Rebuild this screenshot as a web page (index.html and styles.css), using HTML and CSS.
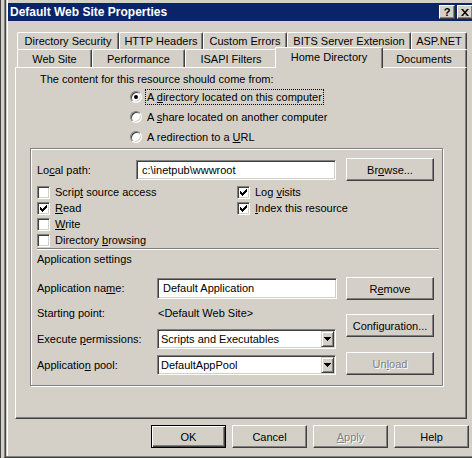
FILE: index.html
```html
<!DOCTYPE html>
<html>
<head>
<meta charset="utf-8">
<title>Default Web Site Properties</title>
<link rel="stylesheet" href="styles.css">
</head>
<body>
<div class="desk">
  <div class="behind"></div>
  <div class="win">
    <div class="frame">
      <div class="titlebar">
        <span class="title">Default Web Site Properties</span>
        <span class="capbtn help">?</span>
        <span class="capbtn close"><svg width="8" height="7" viewBox="0 0 8 7"><path d="M0 0h2l2 2.4L6 0h2L5 3.5 8 7H6L4 4.6 2 7H0l3-3.5z" fill="#000"/></svg></span>
      </div>
      <div class="client">
        <div class="tabs">
          <div class="tabrow row1">
            <div class="tab tab-dirsec">Directory Security</div>
            <div class="tab tab-http">HTTP Headers</div>
            <div class="tab tab-errors">Custom Errors</div>
            <div class="tab tab-bits">BITS Server Extension</div>
            <div class="tab tab-asp">ASP.NET</div>
          </div>
          <div class="tabrow row2">
            <div class="tab tab-web">Web Site</div>
            <div class="tab tab-perf">Performance</div>
            <div class="tab tab-isapi">ISAPI Filters</div>
            <div class="tab tab-home selected">Home Directory</div>
            <div class="tab tab-docs">Documents</div>
          </div>
          <div class="panel">
            <p class="intro">The content for this resource should come from:</p>
            <div class="radios">
              <div class="opt"><span class="radio on"></span><span class="lbl focus">A <u>d</u>irectory located on this computer</span></div>
              <div class="opt"><span class="radio"></span><span class="lbl">A <u>s</u>hare located on another computer</span></div>
              <div class="opt"><span class="radio"></span><span class="lbl">A redirection to a <u>U</u>RL</span></div>
            </div>
            <div class="group">
              <div class="pathrow">
                <span class="plabel">Lo<u>c</u>al path:</span>
                <span class="field path">c:\inetpub\wwwroot</span>
                <span class="btn browse"><span>Br<u>o</u>wse...</span></span>
              </div>
              <div class="checks">
                <div class="chkcol left">
                  <div class="chk"><span class="box"></span><span>Scrip<u>t</u> source access</span></div>
                  <div class="chk"><span class="box"><svg width="7" height="7" viewBox="0 0 7 7"><path d="M0 2h1v3H0zM1 3h1v3H1zM2 4h1v3H2zM3 3h1v3H3zM4 2h1v3H4zM5 1h1v3H5zM6 0h1v3H6z" fill="#000"/></svg></span><span><u>R</u>ead</span></div>
                  <div class="chk"><span class="box"></span><span><u>W</u>rite</span></div>
                  <div class="chk"><span class="box"></span><span>Directory <u>b</u>rowsing</span></div>
                </div>
                <div class="chkcol">
                  <div class="chk"><span class="box"><svg width="7" height="7" viewBox="0 0 7 7"><path d="M0 2h1v3H0zM1 3h1v3H1zM2 4h1v3H2zM3 3h1v3H3zM4 2h1v3H4zM5 1h1v3H5zM6 0h1v3H6z" fill="#000"/></svg></span><span>Log <u>v</u>isits</span></div>
                  <div class="chk"><span class="box"><svg width="7" height="7" viewBox="0 0 7 7"><path d="M0 2h1v3H0zM1 3h1v3H1zM2 4h1v3H2zM3 3h1v3H3zM4 2h1v3H4zM5 1h1v3H5zM6 0h1v3H6z" fill="#000"/></svg></span><span><u>I</u>ndex this resource</span></div>
                </div>
              </div>
              <div class="sep"></div>
              <div class="subhead">Application settings</div>
              <div class="app">
                <div class="appfields">
                  <div class="frow first"><span class="flabel">Application na<u>m</u>e:</span><span class="field appname">Default Application</span></div>
                  <div class="frow"><span class="flabel">Starting point:</span><span class="value">&lt;Default Web Site&gt;</span></div>
                  <div class="frow"><span class="flabel">Execute <u>p</u>ermissions:</span><span class="combo"><span class="ctext">Scripts and Executables</span><span class="drop"><svg width="7" height="4" viewBox="0 0 7 4"><path d="M0 0h7v1H0zM1 1h5v1H1zM2 2h3v1H2zM3 3h1v1H3z" fill="#000"/></svg></span></span></div>
                  <div class="frow"><span class="flabel">Applicatio<u>n</u> pool:</span><span class="combo"><span class="ctext">DefaultAppPool</span><span class="drop"><svg width="7" height="4" viewBox="0 0 7 4"><path d="M0 0h7v1H0zM1 1h5v1H1zM2 2h3v1H2zM3 3h1v1H3z" fill="#000"/></svg></span></span></div>
                </div>
                <div class="appbtns">
                  <span class="btn"><span>R<u>e</u>move</span></span>
                  <span class="btn config"><span>Confi<u>g</u>uration...</span></span>
                  <span class="btn unload disabled"><span>Un<u>l</u>oad</span></span>
                </div>
              </div>
            </div>
          </div>
        </div>
        <div class="actions">
          <span class="btn default">OK</span>
          <span class="btn">Cancel</span>
          <span class="btn disabled"><span><u>A</u>pply</span></span>
          <span class="btn">Help</span>
        </div>
      </div>
    </div>
  </div>
</div>
</body>
</html>
```
FILE: styles.css
```css
* { box-sizing: border-box; }
html, body { margin: 0; padding: 0; }
body {
  width: 472px;
  height: 458px;
  overflow: hidden;
  background: #d4d0c8;
  font-family: "Liberation Sans", Arial, sans-serif;
  font-size: 11px;
  color: #000;
}
u { text-underline-offset: 1px; }

.desk { display: flex; width: 472px; height: 458px; overflow: hidden; }
.behind { flex: none; width: 4px; border-left: 1px solid #404040; background: #d4d0c8; }
.win {
  flex: 1;
  min-width: 0;
  border-left: 1px solid #808080;
  border-bottom: 1px solid #404040;
  box-shadow: inset 1px 0 0 #404040, inset 0 -1px 0 #808080;
  padding-left: 2px;
  padding-bottom: 1px;
}
.frame { height: 100%; border-left: 1px solid #fff; padding-top: 3px; }

.titlebar {
  display: flex;
  align-items: center;
  height: 18px;
  margin-right: -3px;
  padding: 0 2px;
  background: #0a246a;
  color: #fff;
}
.title { flex: 1; font-weight: bold; font-size: 12px; white-space: nowrap; }
.capbtn {
  flex: none;
  width: 16px;
  height: 14px;
  display: flex;
  align-items: center;
  justify-content: center;
  background: #d4d0c8;
  border: 1px solid;
  border-color: #fff #404040 #404040 #fff;
  box-shadow: inset -1px -1px 0 #808080;
  color: #000;
}
.help { margin-right: 2px; font-weight: bold; font-size: 11px; line-height: 12px; }
.close svg { display: block; }

.client { padding: 11px 0 0 7px; }
.tabs { width: 452px; }
.tabrow { display: flex; margin-left: 2px; }
.row1 { height: 17px; }
.row2 { height: 18px; }
.tab {
  flex: none;
  height: 100%;
  background: #d4d0c8;
  border: 1px solid #fff;
  border-bottom: none;
  border-right-color: #404040;
  box-shadow: inset -1px 0 0 #808080;
  border-radius: 2px 2px 0 0;
  text-align: center;
  line-height: 16px;
  white-space: nowrap;
}
.row2 .tab { padding-top: 1px; }
.tab-dirsec { width: 102px; }
.tab-http { width: 84px; }
.tab-errors { width: 84px; }
.tab-bits { width: 124px; }
.tab-asp { width: 56px; }
.tab-web { width: 75px; }
.tab-perf { width: 93px; }
.tab-isapi { width: 92px; }
.tab-home { width: 108px; }
.tab-docs { width: 86px; }
.row2 .tab.selected {
  position: relative;
  z-index: 1;
  height: 21px;
  margin: -2px -2px 0 -2px;
  padding-top: 0;
  line-height: 18px;
}

.panel {
  height: 352px;
  border: 1px solid;
  border-color: #fff #404040 #404040 #fff;
  box-shadow: inset -1px -1px 0 #808080;
}
.intro { margin: 5px 0 0 24px; line-height: 13px; }
.radios { margin: 1px 0 0 114px; }
.opt { display: flex; align-items: center; height: 20px; }
.radio {
  flex: none;
  width: 12px;
  height: 12px;
  margin-right: 3px;
  border-radius: 50%;
  border: 1px solid;
  border-color: #808080 #fff #fff #808080;
  box-shadow: inset 1px 1px 0 #404040, inset -1px -1px 0 #d4d0c8;
  background: #fff;
  display: flex;
  align-items: center;
  justify-content: center;
}
.radio.on::after { content: ""; width: 4px; height: 4px; border-radius: 50%; background: #000; }
.lbl { border: 1px dotted transparent; padding: 0 1px; line-height: 14px; }
.lbl.focus { border-color: #000; }

.group {
  margin: 1px 0 0 14px;
  width: 413px;
  height: 238px;
  border: 1px solid #808080;
  box-shadow: inset 1px 1px 0 #fff, 1px 1px 0 #fff;
  padding-left: 6px;
}
.pathrow { display: flex; align-items: center; height: 23px; margin-top: 9px; }
.plabel { width: 99px; }
.field {
  display: flex;
  align-items: center;
  height: 20px;
  padding-left: 5px;
  background: #fff;
  border: 1px solid;
  border-color: #808080 #fff #fff #808080;
  box-shadow: inset 1px 1px 0 #404040, inset -1px -1px 0 #d4d0c8;
  white-space: nowrap;
}
.path { width: 200px; }
.btn {
  flex: none;
  display: flex;
  align-items: center;
  justify-content: center;
  height: 23px;
  background: #d4d0c8;
  border: 1px solid;
  border-color: #fff #404040 #404040 #fff;
  box-shadow: inset -1px -1px 0 #808080;
  white-space: nowrap;
}
.browse { width: 88px; margin-left: 10px; }
.disabled { color: #808080; text-shadow: 1px 1px 0 #fff; }

.checks { display: flex; margin-top: 3px; }
.chkcol { display: flex; flex-direction: column; }
.chkcol.left { width: 200px; }
.chk { display: flex; align-items: center; height: 16px; white-space: nowrap; }
.box {
  flex: none;
  width: 13px;
  height: 13px;
  margin-right: 5px;
  background: #fff;
  border: 1px solid;
  border-color: #808080 #fff #fff #808080;
  box-shadow: inset 1px 1px 0 #404040, inset -1px -1px 0 #d4d0c8;
}
.box svg { display: block; margin: 2px; }

.sep { width: 402px; height: 2px; border-top: 1px solid #808080; border-bottom: 1px solid #fff; }
.subhead { margin-top: 3px; line-height: 13px; }

.app { display: flex; margin-top: 10px; }
.appfields { width: 300px; flex: none; }
.frow { display: flex; align-items: center; height: 26px; white-space: nowrap; }
.frow.first { height: 24px; }
.flabel { width: 120px; flex: none; }
.appname { width: 180px; height: 21px; }
.value { padding-left: 1px; }
.combo {
  display: flex;
  align-items: center;
  width: 179px;
  height: 20px;
  padding: 0 1px 0 3px;
  background: #fff;
  border: 1px solid;
  border-color: #808080 #fff #fff #808080;
  box-shadow: inset 1px 1px 0 #404040, inset -1px -1px 0 #d4d0c8;
}
.ctext { flex: 1; }
.drop {
  flex: none;
  width: 13px;
  height: 16px;
  display: flex;
  align-items: center;
  justify-content: center;
  background: #d4d0c8;
  border: 1px solid;
  border-color: #d4d0c8 #404040 #404040 #d4d0c8;
  box-shadow: inset 1px 1px 0 #fff, inset -1px -1px 0 #808080;
}
.drop svg { display: block; }
.appbtns { display: flex; flex-direction: column; margin: 1px 0 0 9px; }
.appbtns .btn { width: 88px; }
.appbtns .config { margin-top: 14px; }
.appbtns .unload { margin-top: 15px; }

.actions { display: flex; gap: 6px; margin: 6px 0 0 136px; }
.actions .btn { width: 75px; }
.actions .btn.default {
  border-color: #000;
  box-shadow: inset 1px 1px 0 #fff, inset -1px -1px 0 #404040, inset -2px -2px 0 #808080;
}
```
